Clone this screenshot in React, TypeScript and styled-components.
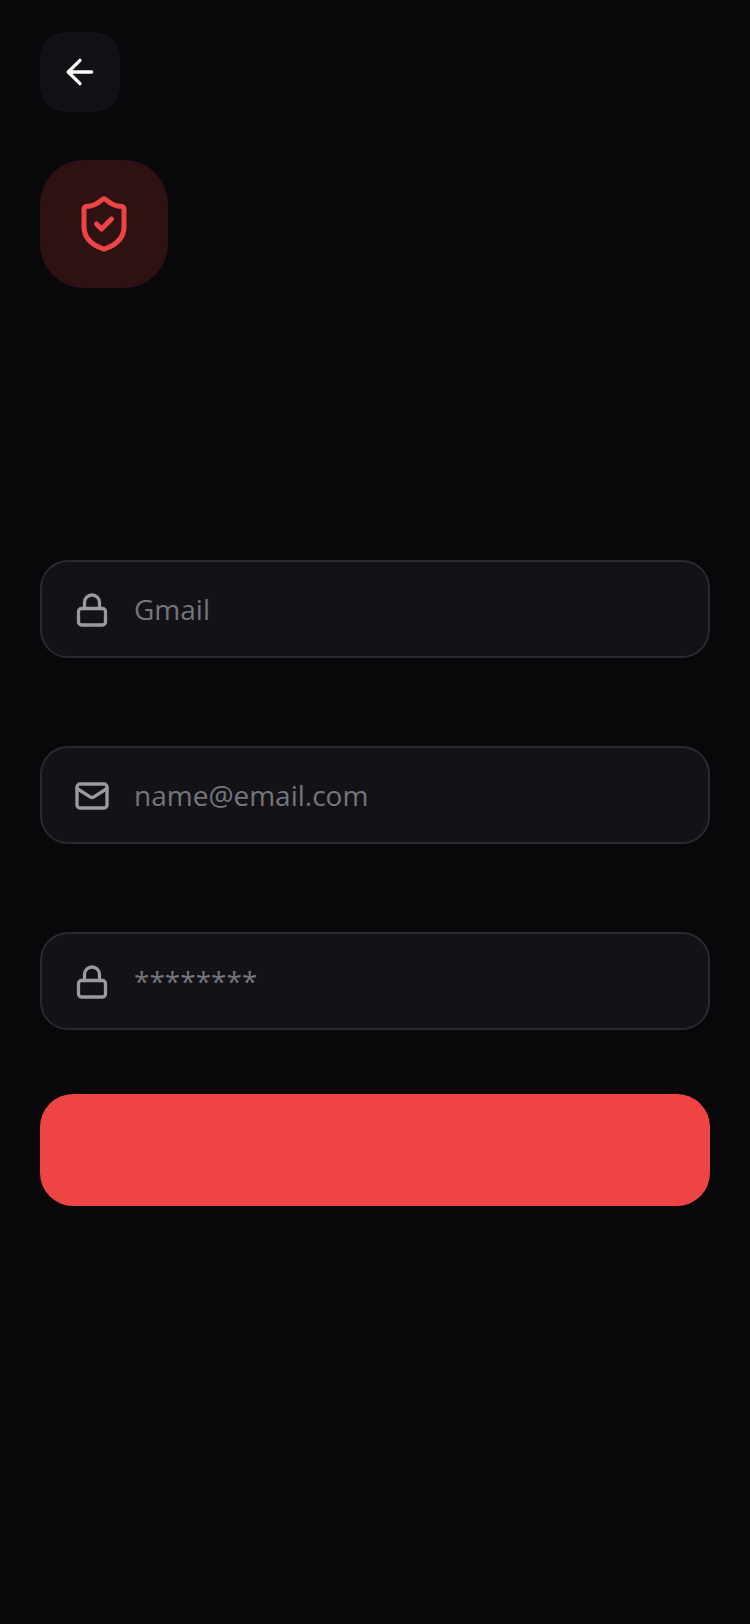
import React from "react";
import styled, { createGlobalStyle } from "styled-components";
import { ArrowLeft, Lock, Mail, ShieldCheck } from "lucide-react";

const GlobalStyle = createGlobalStyle`
  html, body {
    margin: 0;
    padding: 0;
    background: #08080b;
  }
  * {
    box-sizing: border-box;
  }
`;

const fields = [
  { icon: Lock, placeholder: "Gmail", type: "text" },
  { icon: Mail, placeholder: "name@email.com", type: "email" },
  { icon: Lock, placeholder: "********", type: "text" },
];

const App = () => {
  return (
    <Page>
      <GlobalStyle />
      <BackButton type="button" aria-label="Back">
        <ArrowLeft size={40} color="#ffffff" strokeWidth={2} />
      </BackButton>
      <ShieldBox>
        <ShieldCheck size={60} color="#ef4444" strokeWidth={2} />
      </ShieldBox>
      <Form>
        {fields.map((field) => (
          <Field key={field.placeholder}>
            <field.icon size={36} color="#9a9aa2" strokeWidth={2.2} />
            <Input type={field.type} placeholder={field.placeholder} />
          </Field>
        ))}
        <Submit type="button" />
      </Form>
    </Page>
  );
};

export default App;

const Page = styled.div`
  width: 750px;
  min-height: 1624px;
  padding: 32px 40px;
  background: #08080b;
  font-family: "Open Sans", "Noto Sans", sans-serif;
`;

const BackButton = styled.button`
  width: 80px;
  height: 80px;
  border: none;
  border-radius: 26px;
  background: #121216;
  display: flex;
  align-items: center;
  justify-content: center;
  padding: 0;
`;

const ShieldBox = styled.div`
  width: 128px;
  height: 128px;
  margin-top: 48px;
  border-radius: 44px;
  background: #2e1113;
  display: flex;
  align-items: center;
  justify-content: center;
`;

const Form = styled.form`
  margin-top: 272px;
  display: flex;
  flex-direction: column;
`;

const Field = styled.div`
  height: 98px;
  margin-bottom: 88px;
  padding: 0 32px;
  border: 2px solid #29292e;
  border-radius: 28px;
  background: #131317;
  display: flex;
  align-items: center;
  gap: 24px;

  svg {
    flex: none;
    margin-top: 2px;
  }

  &:nth-of-type(3) {
    margin-bottom: 64px;
  }
`;

const Input = styled.input`
  flex: 1;
  min-width: 0;
  border: none;
  outline: none;
  padding: 0;
  background: transparent;
  color: #ffffff;
  font-family: inherit;
  font-size: 28px;

  &::placeholder {
    color: #75757c;
    opacity: 1;
  }
`;

const Submit = styled.button`
  height: 112px;
  border: none;
  border-radius: 33px;
  background: #ef4444;
`;
